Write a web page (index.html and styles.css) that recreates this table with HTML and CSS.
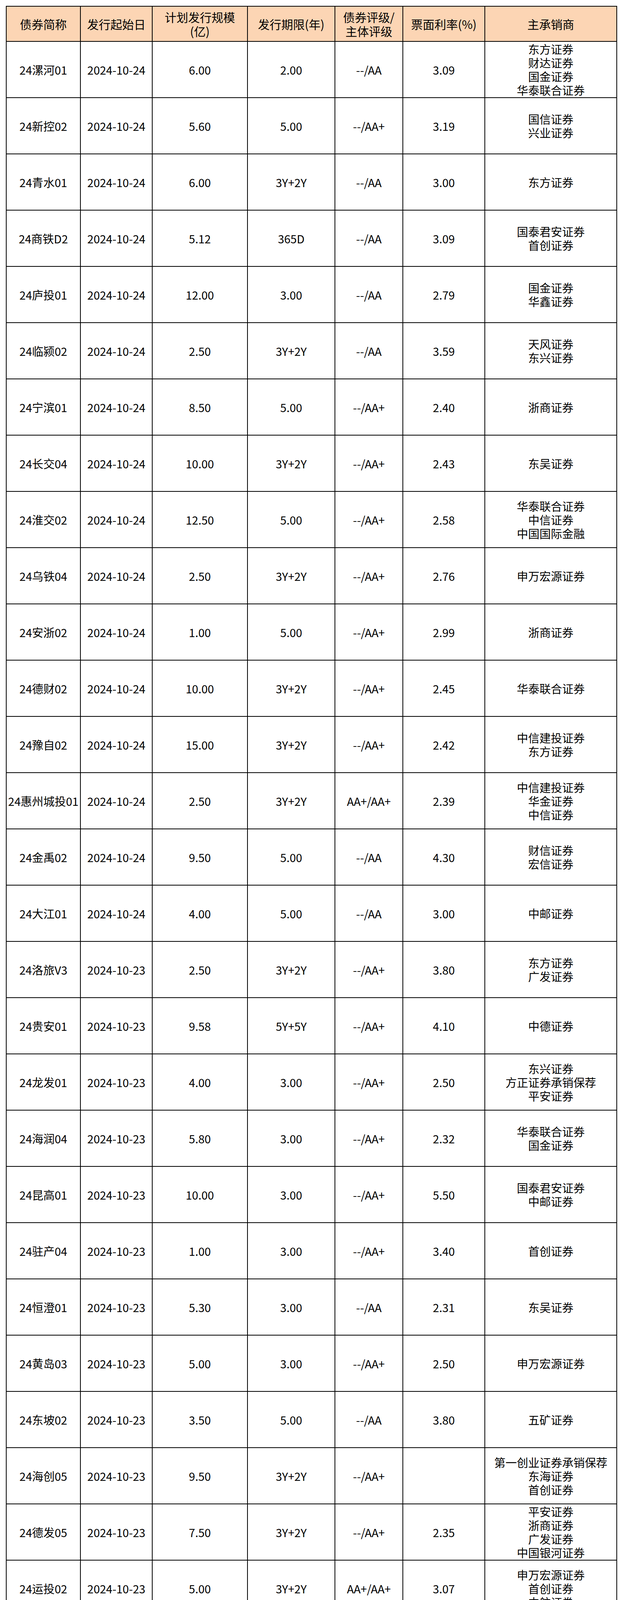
FILE: index.html
```html
<!DOCTYPE html>
<html lang="zh-CN">
<head>
<meta charset="utf-8">
<title>债券发行一览</title>
<link rel="stylesheet" href="styles.css">
</head>
<body>
<div class="sheet">
<table class="bonds">
<colgroup>
<col class="c-name"><col class="c-date"><col class="c-amt"><col class="c-term"><col class="c-rate"><col class="c-cpn"><col class="c-uw">
</colgroup>
<thead>
<tr><th>债券简称</th><th>发行起始日</th><th>计划发行规模<br>(亿)</th><th>发行期限(年)</th><th>债券评级/<br>主体评级</th><th>票面利率(%)</th><th>主承销商</th></tr>
</thead>
<tbody>
<tr><td>24漯河01</td><td>2024-10-24</td><td>6.00</td><td>2.00</td><td>--/AA</td><td>3.09</td><td>东方证券<br>财达证券<br>国金证券<br>华泰联合证券</td></tr>
<tr><td>24新控02</td><td>2024-10-24</td><td>5.60</td><td>5.00</td><td>--/AA+</td><td>3.19</td><td>国信证券<br>兴业证券</td></tr>
<tr><td>24青水01</td><td>2024-10-24</td><td>6.00</td><td>3Y+2Y</td><td>--/AA</td><td>3.00</td><td>东方证券</td></tr>
<tr><td>24商铁D2</td><td>2024-10-24</td><td>5.12</td><td>365D</td><td>--/AA</td><td>3.09</td><td>国泰君安证券<br>首创证券</td></tr>
<tr><td>24庐投01</td><td>2024-10-24</td><td>12.00</td><td>3.00</td><td>--/AA</td><td>2.79</td><td>国金证券<br>华鑫证券</td></tr>
<tr><td>24临颍02</td><td>2024-10-24</td><td>2.50</td><td>3Y+2Y</td><td>--/AA</td><td>3.59</td><td>天风证券<br>东兴证券</td></tr>
<tr><td>24宁滨01</td><td>2024-10-24</td><td>8.50</td><td>5.00</td><td>--/AA+</td><td>2.40</td><td>浙商证券</td></tr>
<tr><td>24长交04</td><td>2024-10-24</td><td>10.00</td><td>3Y+2Y</td><td>--/AA+</td><td>2.43</td><td>东吴证券</td></tr>
<tr><td>24淮交02</td><td>2024-10-24</td><td>12.50</td><td>5.00</td><td>--/AA+</td><td>2.58</td><td>华泰联合证券<br>中信证券<br>中国国际金融</td></tr>
<tr><td>24乌铁04</td><td>2024-10-24</td><td>2.50</td><td>3Y+2Y</td><td>--/AA+</td><td>2.76</td><td>申万宏源证券</td></tr>
<tr><td>24安浙02</td><td>2024-10-24</td><td>1.00</td><td>5.00</td><td>--/AA+</td><td>2.99</td><td>浙商证券</td></tr>
<tr><td>24德财02</td><td>2024-10-24</td><td>10.00</td><td>3Y+2Y</td><td>--/AA+</td><td>2.45</td><td>华泰联合证券</td></tr>
<tr><td>24豫自02</td><td>2024-10-24</td><td>15.00</td><td>3Y+2Y</td><td>--/AA+</td><td>2.42</td><td>中信建投证券<br>东方证券</td></tr>
<tr><td>24惠州城投01</td><td>2024-10-24</td><td>2.50</td><td>3Y+2Y</td><td>AA+/AA+</td><td>2.39</td><td>中信建投证券<br>华金证券<br>中信证券</td></tr>
<tr><td>24金禹02</td><td>2024-10-24</td><td>9.50</td><td>5.00</td><td>--/AA</td><td>4.30</td><td>财信证券<br>宏信证券</td></tr>
<tr><td>24大江01</td><td>2024-10-24</td><td>4.00</td><td>5.00</td><td>--/AA</td><td>3.00</td><td>中邮证券</td></tr>
<tr><td>24洛旅V3</td><td>2024-10-23</td><td>2.50</td><td>3Y+2Y</td><td>--/AA+</td><td>3.80</td><td>东方证券<br>广发证券</td></tr>
<tr><td>24贵安01</td><td>2024-10-23</td><td>9.58</td><td>5Y+5Y</td><td>--/AA+</td><td>4.10</td><td>中德证券</td></tr>
<tr><td>24龙发01</td><td>2024-10-23</td><td>4.00</td><td>3.00</td><td>--/AA+</td><td>2.50</td><td>东兴证券<br>方正证券承销保荐<br>平安证券</td></tr>
<tr><td>24海润04</td><td>2024-10-23</td><td>5.80</td><td>3.00</td><td>--/AA+</td><td>2.32</td><td>华泰联合证券<br>国金证券</td></tr>
<tr><td>24昆高01</td><td>2024-10-23</td><td>10.00</td><td>3.00</td><td>--/AA+</td><td>5.50</td><td>国泰君安证券<br>中邮证券</td></tr>
<tr><td>24驻产04</td><td>2024-10-23</td><td>1.00</td><td>3.00</td><td>--/AA+</td><td>3.40</td><td>首创证券</td></tr>
<tr><td>24恒澄01</td><td>2024-10-23</td><td>5.30</td><td>3.00</td><td>--/AA</td><td>2.31</td><td>东吴证券</td></tr>
<tr><td>24黄岛03</td><td>2024-10-23</td><td>5.00</td><td>3.00</td><td>--/AA+</td><td>2.50</td><td>申万宏源证券</td></tr>
<tr><td>24东坡02</td><td>2024-10-23</td><td>3.50</td><td>5.00</td><td>--/AA</td><td>3.80</td><td>五矿证券</td></tr>
<tr><td>24海创05</td><td>2024-10-23</td><td>9.50</td><td>3Y+2Y</td><td>--/AA+</td><td></td><td>第一创业证券承销保荐<br>东海证券<br>首创证券</td></tr>
<tr><td>24德发05</td><td>2024-10-23</td><td>7.50</td><td>3Y+2Y</td><td>--/AA+</td><td>2.35</td><td>平安证券<br>浙商证券<br>广发证券<br>中国银河证券</td></tr>
<tr><td>24运投02</td><td>2024-10-23</td><td>5.00</td><td>3Y+2Y</td><td>AA+/AA+</td><td>3.07</td><td>申万宏源证券<br>首创证券<br>中航证券</td></tr>
<tr><td>24世纪02</td><td>2024-10-23</td><td>2.36</td><td>5.00</td><td>--/AA+</td><td>2.98</td><td>东吴证券</td></tr>
<tr><td>24临沪02</td><td>2024-10-22</td><td>6.00</td><td>3Y+2Y</td><td>--/AA</td><td>2.47</td><td>东方证券<br>浙商证券<br>国投证券</td></tr>
<tr><td>24岳开01</td><td>2024-10-22</td><td>4.50</td><td>5.00</td><td>--/AA</td><td>3.90</td><td>财信证券<br>五矿证券</td></tr>
<tr><td>24浐灞02</td><td>2024-10-22</td><td>5.00</td><td>3.00</td><td>--/AA</td><td>4.58</td><td>天风证券<br>国投证券<br>西部证券</td></tr>
<tr><td>24龙港01</td><td>2024-10-22</td><td>4.00</td><td>3.00</td><td>--/AA</td><td>2.18</td><td>国泰君安证券</td></tr>
<tr><td>24岳交01</td><td>2024-10-22</td><td>9.00</td><td>3.00</td><td>--/AA</td><td>2.87</td><td>申万宏源证券<br>兴业证券</td></tr>
<tr><td>24瓯江02</td><td>2024-10-22</td><td>5.00</td><td>3.00</td><td>--/AA</td><td>2.47</td><td>华泰联合证券<br>中信证券</td></tr>
<tr><td>24柯资05</td><td>2024-10-22</td><td>16.20</td><td>3.00</td><td>--/AA+</td><td>2.30</td><td>中信证券<br>天风证券</td></tr>
<tr><td>24桐控02</td><td>2024-10-22</td><td>10.00</td><td>5.00</td><td>--/AA+</td><td>2.67</td><td>国金证券<br>浙商证券<br>东方证券</td></tr>
<tr><td>24惠投04</td><td>2024-10-22</td><td>5.00</td><td>5.00</td><td>--/AA+</td><td>2.45</td><td>中信证券</td></tr>
<tr><td>24惠投03</td><td>2024-10-22</td><td>5.00</td><td>3Y+2Y</td><td>--/AA+</td><td>2.25</td><td>中信证券</td></tr>
<tr><td>24嘉高04</td><td>2024-10-22</td><td>2.80</td><td>5.00</td><td>--/AA+</td><td>2.39</td><td>中信证券<br>东吴证券</td></tr>
<tr><td>24交旅02</td><td>2024-10-22</td><td>5.00</td><td>5.00</td><td>--/AA+</td><td>3.17</td><td>国金证券</td></tr>
<tr><td>24金坛05</td><td>2024-10-22</td><td>10.00</td><td>5.00</td><td>--/AA+</td><td>2.68</td><td>东吴证券<br>东海证券<br>华创证券</td></tr>
<tr><td>24开福03</td><td>2024-10-22</td><td>2.50</td><td>3Y+2Y</td><td>--/AA+</td><td>2.27</td><td>中泰证券<br>财信证券</td></tr>
<tr><td>24威产02</td><td>2024-10-22</td><td>3.00</td><td>3Y+2Y</td><td>--/AA+</td><td>2.60</td><td>国泰君安证券<br>中信建投证券</td></tr>
<tr><td>24禹通01</td><td>2024-10-22</td><td>3.30</td><td>3Y+2Y</td><td>--/AA</td><td>2.56</td><td>中信建投证券</td></tr>
<tr><td>24泸临02</td><td>2024-10-21</td><td>2.90</td><td>5.00</td><td>--/AA</td><td>4.50</td><td>华西证券<br>五矿证券</td></tr>
<tr><td>24云港D2</td><td>2024-10-21</td><td>4.00</td><td>365D</td><td>--/AA+</td><td>2.25</td><td>中信建投证券<br>中信证券<br>国泰君安证券<br>华西证券</td></tr>
<tr><td>24苏旅01</td><td>2024-10-21</td><td>1.00</td><td>1.00</td><td>--/AA</td><td>2.25</td><td>东吴证券</td></tr>
<tr><td>24商铁04</td><td>2024-10-21</td><td>4.00</td><td>3.00</td><td>--/AA</td><td>2.97</td><td>平安证券<br>兴业证券<br>财达证券</td></tr>
<tr><td>24简工01</td><td>2024-10-21</td><td>6.50</td><td>5.00</td><td>--/AA</td><td>4.00</td><td>申港证券</td></tr>
<tr><td>24即墨05</td><td>2024-10-21</td><td>5.00</td><td>3Y+2Y</td><td>--/AA+</td><td>2.98</td><td>浙商证券</td></tr>
<tr><td>24即墨06</td><td>2024-10-21</td><td>5.00</td><td>5.00</td><td>--/AA+</td><td>3.79</td><td>浙商证券</td></tr>
<tr><td>24二七02</td><td>2024-10-21</td><td>2.50</td><td>3Y+2Y</td><td>AA+/AA</td><td>2.60</td><td>财达证券<br>兴业证券</td></tr>
<tr><td>24武发05</td><td>2024-10-21</td><td>2.75</td><td>5.00</td><td>--/AA+</td><td>2.69</td><td>中信建投证券<br>兴业证券<br>财达证券<br>广发证券</td></tr>
</tbody>
</table>
</div>
</body>
</html>
```

FILE: styles.css
```css
html, body {
  margin: 0;
  padding: 0;
  background: #ffffff;
}

body {
  font-family: "Noto Sans CJK SC", "Noto Sans", sans-serif;
  color: #000000;
}

.sheet {
  padding: 15px 0 0 15px;
}

.bonds {
  border-collapse: separate;
  border-spacing: 0;
  table-layout: fixed;
  width: 1566px;
  border-top: 2px solid #000000;
  border-left: 2px solid #000000;
}

.c-name { width: 190px; }
.c-date { width: 184px; }
.c-amt  { width: 244px; }
.c-term { width: 224px; }
.c-rate { width: 174px; }
.c-cpn  { width: 210px; }
.c-uw   { width: 338px; }

.bonds th,
.bonds td {
  border-right: 2px solid #000000;
  border-bottom: 2px solid #000000;
  padding: 0;
  text-align: center;
  vertical-align: middle;
  font-size: 29px;
  line-height: 35px;
  font-weight: normal;
  white-space: nowrap;
  color: #000000;
}

.bonds thead th {
  background: #fcd5b4;
  height: 88px;
  font-size: 30px;
  line-height: 36px;
}

.bonds tbody td {
  height: 142px;
}
```
